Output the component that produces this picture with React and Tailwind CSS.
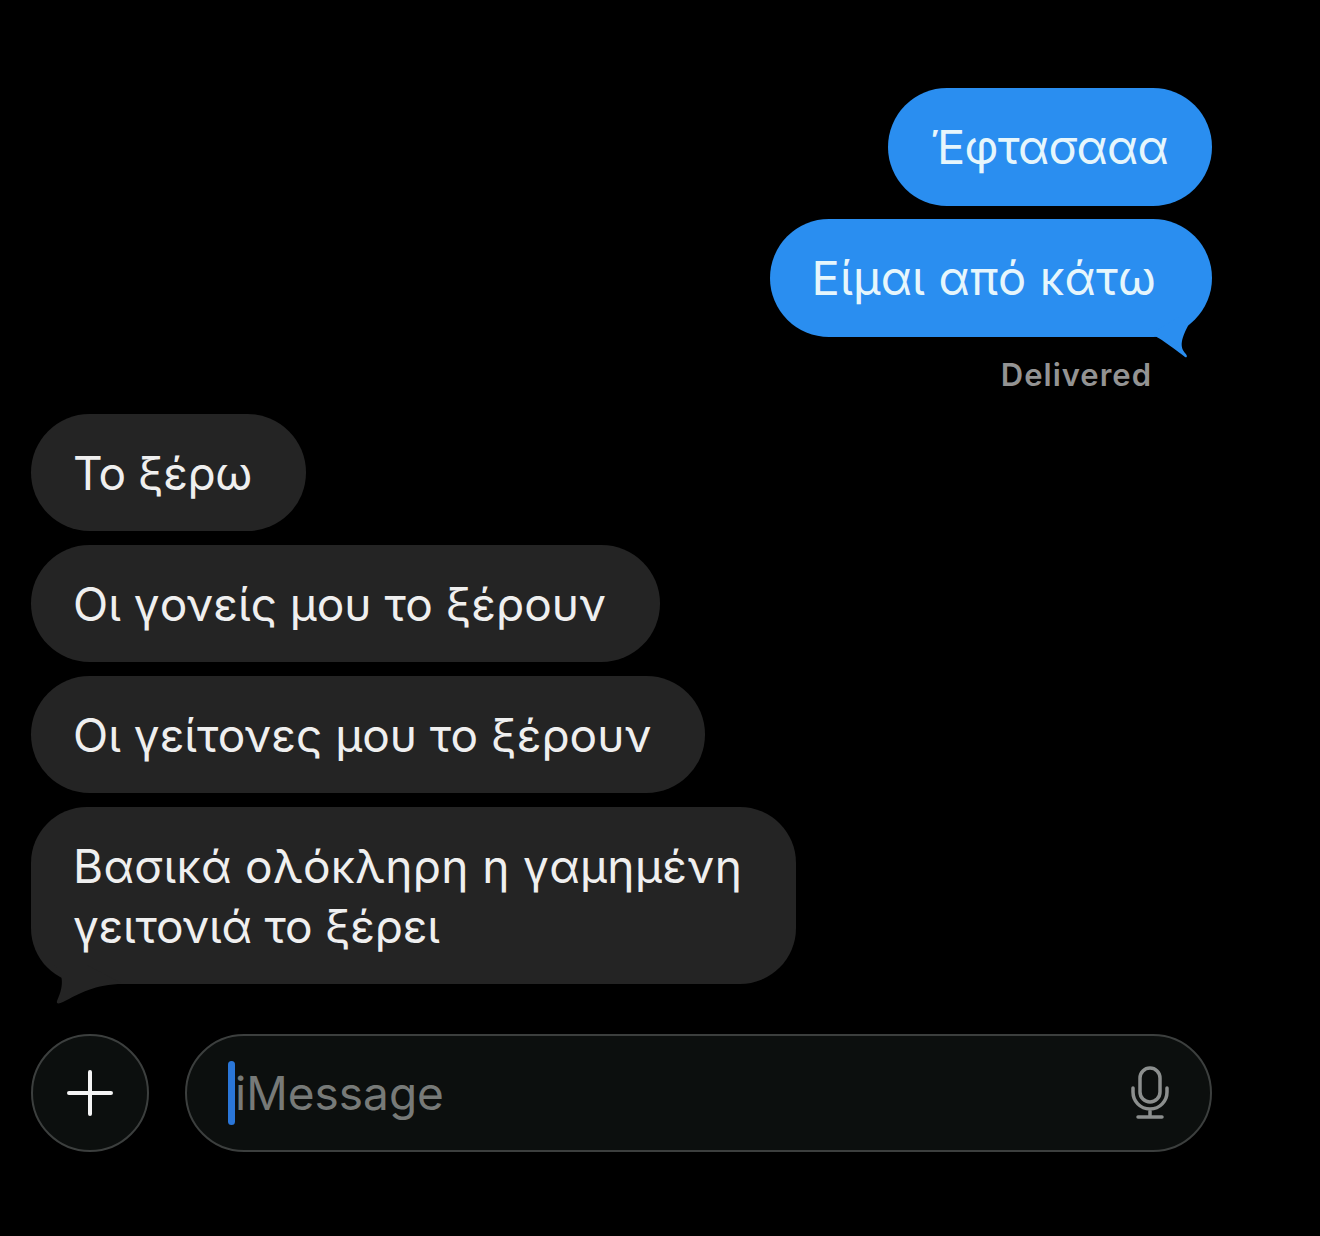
const font = { fontFamily: 'Inter, "Noto Sans", sans-serif' };

const SentBubble = ({ children, tail, className }) => (
    <div className={`relative self-end h-[118px] rounded-[59px] bg-[#2a8ef0] flex items-center text-[47px] leading-[60px] text-[#e6f6fc] ${className}`}>
        <span className="whitespace-nowrap">{children}</span>
        {tail && (
            <svg className="absolute right-[22px] bottom-[-21px]" width="40" height="42" viewBox="0 0 40 42">
                <path d="M0 18 C8 20 26 34 35 41 C37 42 38 40 35 37 C31 32 29 26 39 8 L30 0 Z" fill="#2a8ef0" />
            </svg>
        )}
    </div>
);

const ReceivedBubble = ({ children, tail, className }) => (
    <div className={`relative self-start bg-[#242424] pl-[42px] pr-[54px] py-[28.5px] text-[46px] leading-[60px] text-[#efefef] ${className}`}>
        {children}
        {tail && (
            <svg className="absolute left-[14px] bottom-[-20px]" width="80" height="40" viewBox="0 0 80 40">
                <path d="M8 0 C18 8 20 20 12 37 C11 40 14 40 18 38 C34 30 50 20 78 20 L40 0 Z" fill="#242424" />
            </svg>
        )}
    </div>
);

export default function App() {
    return (
        <div className="min-h-[1236px] w-[1320px] bg-black pt-[88px] pl-[31px] pr-[108px] flex flex-col" style={font}>
            <div className="flex flex-col gap-[13px]">
                <SentBubble className="pl-[43px] pr-[44px] tracking-[-0.7px]">Έφτασααα</SentBubble>
                <SentBubble tail className="pl-[42px] pr-[56px] tracking-[0.15px]">Είμαι από κάτω</SentBubble>
            </div>
            <p className="self-end mr-[60px] mt-[20px] text-[31px] leading-[36px] font-semibold tracking-[1px] text-[#939393]">Delivered</p>

            <div className="mt-[21px] flex flex-col gap-[14px]">
                <ReceivedBubble className="rounded-[59px] tracking-[-0.5px]">Το ξέρω</ReceivedBubble>
                <ReceivedBubble className="rounded-[59px]">Οι γονείς μου το ξέρουν</ReceivedBubble>
                <ReceivedBubble className="rounded-[59px]">Οι γείτονες μου το ξέρουν</ReceivedBubble>
                <ReceivedBubble tail className="rounded-[56px]">
                    <span className="tracking-[0.35px]">Βασικά ολόκληρη η γαμημένη</span>
                    <br />
                    <span className="tracking-[-0.25px]">γειτονιά το ξέρει</span>
                </ReceivedBubble>
            </div>

            <div className="mt-[50px] flex items-center gap-[36px]">
                <button className="w-[118px] h-[118px] shrink-0 rounded-full border-2 border-[#3c3f3e] bg-[#0c0f0e] flex items-center justify-center">
                    <svg width="46" height="46" viewBox="0 0 46 46" stroke="#f4f4f4" strokeWidth="4" strokeLinecap="round">
                        <path d="M23 2V44M2 23H44" />
                    </svg>
                </button>
                <div className="flex-1 h-[118px] rounded-[59px] border-2 border-[#3c3f3e] bg-[#0c0f0e] pl-[41px] pr-[41px] flex items-center">
                    <span className="w-[7px] h-[64px] rounded-full bg-[#2a76d8]" />
                    <span className="flex-1 text-[46px] text-[#777a78]">iMessage</span>
                    <svg width="38" height="54" viewBox="0 0 38 54" fill="none" stroke="#8c8f8e" strokeWidth="3.5" strokeLinecap="round">
                        <rect x="9" y="2" width="20" height="34" rx="10" />
                        <path d="M2 22V26C2 35 9 43 19 43C29 43 36 35 36 26V22M19 43V51M7 51H31" />
                    </svg>
                </div>
            </div>
        </div>
    );
}
